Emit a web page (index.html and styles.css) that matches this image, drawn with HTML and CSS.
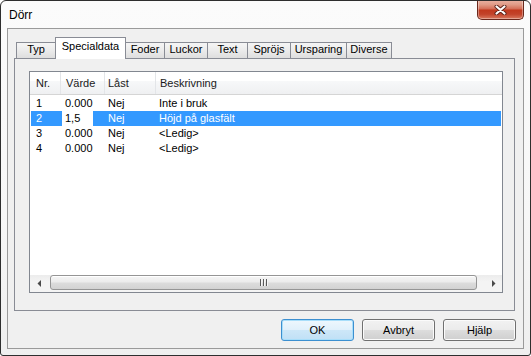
FILE: index.html
```html
<!DOCTYPE html>
<html>
<head>
<meta charset="utf-8">
<title>Dörr</title>
<link rel="stylesheet" href="styles.css">
</head>
<body>
<div class="window">
  <div class="titlebar">
    <span class="title">Dörr</span>
    <div class="close">
      <svg width="13" height="10" viewBox="0 0 13 10">
        <path d="M2.5 1.5 L10.5 8.5 M10.5 1.5 L2.5 8.5" stroke="#5b2218" stroke-width="4" stroke-linecap="round" fill="none"/>
        <path d="M2.5 1.5 L10.5 8.5 M10.5 1.5 L2.5 8.5" stroke="#ffffff" stroke-width="2.2" stroke-linecap="round" fill="none"/>
      </svg>
    </div>
  </div>
  <div class="client">
    <div class="tabs">
      <div class="tab t-typ">Typ</div>
      <div class="tab sel t-spec">Specialdata</div>
      <div class="tab t-foder">Foder</div>
      <div class="tab t-luckor">Luckor</div>
      <div class="tab t-text">Text</div>
      <div class="tab t-sprojs">Spröjs</div>
      <div class="tab t-ursp">Ursparing</div>
      <div class="tab t-div">Diverse</div>
    </div>
    <div class="panel">
      <div class="list">
        <div class="header">
          <div class="hc h0">Nr.</div>
          <div class="hc h1">Värde</div>
          <div class="hc h2">Låst</div>
          <div class="hc h3">Beskrivning</div>
        </div>
        <div class="body">
          <div class="row">
            <span class="c0">1</span><span class="c1">0.000</span><span class="c2">Nej</span><span class="c3">Inte i bruk</span>
          </div>
          <div class="row selected">
            <span class="c0">2</span><span class="c1 editcell"><span class="edit">1,5</span></span><span class="c2">Nej</span><span class="c3">Höjd på glasfält</span>
          </div>
          <div class="row">
            <span class="c0">3</span><span class="c1">0.000</span><span class="c2">Nej</span><span class="c3">&lt;Ledig&gt;</span>
          </div>
          <div class="row">
            <span class="c0">4</span><span class="c1">0.000</span><span class="c2">Nej</span><span class="c3">&lt;Ledig&gt;</span>
          </div>
        </div>
        <div class="hscroll">
          <div class="sbtn">
            <svg width="4" height="7" viewBox="0 0 4 7"><path d="M4 0 L0.5 3.5 L4 7 Z" fill="#4a4a4a"/></svg>
          </div>
          <div class="thumb">
            <span class="grip"></span><span class="grip"></span><span class="grip"></span>
          </div>
          <div class="track"></div>
          <div class="sbtn">
            <svg width="4" height="7" viewBox="0 0 4 7"><path d="M0 0 L3.5 3.5 L0 7 Z" fill="#4a4a4a"/></svg>
          </div>
        </div>
      </div>
    </div>
    <div class="buttons">
      <div class="btn default">OK</div>
      <div class="btn">Avbryt</div>
      <div class="btn">Hjälp</div>
    </div>
  </div>
</div>
</body>
</html>
```
FILE: styles.css
```css
html, body {
  margin: 0;
  padding: 0;
  background: #ffffff;
}

body {
  font-family: "Liberation Sans", Arial, sans-serif;
  font-size: 11px;
  color: #000;
}

.window {
  width: 531px;
  height: 356px;
  box-sizing: border-box;
  border: 1px solid #2e2e2e;
  border-radius: 6px 6px 3px 3px;
  background: linear-gradient(180deg, #fbfbfb 0%, #f7f7f7 60%, #efefef 100%);
  padding: 0 6px 6px 6px;
  display: flex;
  flex-direction: column;
  overflow: hidden;
}

.titlebar {
  height: 27px;
  flex: none;
  display: flex;
  justify-content: space-between;
  align-items: flex-start;
}

.title {
  font-size: 12px;
  line-height: 14px;
  padding: 7px 0 0 2px;
  color: #000;
}

.close {
  width: 47px;
  height: 20px;
  margin-top: -1px;
  box-sizing: border-box;
  border: 1px solid #6a281c;
  border-top: none;
  border-radius: 0 0 5px 5px;
  background: linear-gradient(180deg, #eab2a3 0%, #e09a86 25%, #d36b54 48%, #c1381d 52%, #c2432a 75%, #d9795f 100%);
  box-shadow: inset 0 0 0 1px rgba(255, 255, 255, 0.35);
  display: flex;
  align-items: center;
  justify-content: center;
}

.client {
  flex: 1;
  border: 1px solid #9a9a9a;
  background: #f0f0f0;
  padding: 0 8px 7px 6px;
  display: flex;
  flex-direction: column;
}

.tabs {
  display: flex;
  align-items: flex-end;
  height: 21px;
  margin: 8px 0 0 2px;
}

.tab {
  box-sizing: border-box;
  height: 16px;
  border: 1px solid #898c95;
  border-bottom: none;
  margin-left: -1px;
  background: linear-gradient(180deg, #f5f5f5 0%, #ebebeb 50%, #dedede 100%);
  text-align: center;
  line-height: 13px;
  white-space: nowrap;
}

.tab.t-typ { margin-left: 0; width: 40px; }
.tab.t-spec { width: 71px; }
.tab.t-foder { width: 40px; }
.tab.t-luckor { width: 44px; }
.tab.t-text { width: 41px; }
.tab.t-sprojs { width: 44px; }
.tab.t-ursp { width: 57px; }
.tab.t-div { width: 46px; }

.tab.sel {
  height: 22px;
  margin-bottom: -1px;
  background: #ffffff;
  position: relative;
  z-index: 1;
  line-height: 17px;
}

.panel {
  box-sizing: border-box;
  height: 253px;
  border: 1px solid #898c95;
  background: #f0f0f0;
  padding: 12px 11px 17px 14px;
}

.list {
  width: 474px;
  height: 222px;
  box-sizing: border-box;
  border: 1px solid #828790;
  background: #ffffff;
  display: flex;
  flex-direction: column;
}

.header {
  height: 23px;
  flex: none;
  box-sizing: border-box;
  border-bottom: 1px solid #d5d5d5;
  background: linear-gradient(180deg, #ffffff 0%, #ffffff 40%, #f7f8f9 41%, #eff0f2 100%);
  display: grid;
  grid-template-columns: 31px 44px 51px 1fr;
}

.hc {
  border-right: 1px solid #e3e5e8;
  line-height: 21px;
  padding-top: 1px;
  color: #1a1a1a;
  white-space: nowrap;
}

.hc.h0 { padding-left: 6px; }
.hc.h1 { padding-left: 5px; }
.hc.h2 { padding-left: 3px; }
.hc.h3 { padding-left: 4px; border-right: none; }

.body {
  flex: 1;
  padding-top: 1px;
}

.row {
  display: grid;
  grid-template-columns: 31px 43px 51px 1fr;
  height: 15px;
  line-height: 15px;
  margin: 0 1px;
  white-space: nowrap;
}

.row .c0 { padding-left: 5px; }
.row .c1 { padding-left: 3px; }
.row .c2 { padding-left: 3px; }
.row .c3 { padding-left: 3px; }

.row.selected {
  background: #3399ff;
  color: #ffffff;
}

.row .c1.editcell {
  padding-left: 0;
}

.edit {
  display: block;
  width: 31px;
  box-sizing: border-box;
  padding-left: 3px;
  background: #ffffff;
  color: #000000;
}

.hscroll {
  height: 17px;
  flex: none;
  display: flex;
  background: linear-gradient(180deg, #ececec 0%, #f4f4f4 40%, #f4f4f4 100%);
}

.sbtn {
  width: 17px;
  display: flex;
  align-items: center;
  justify-content: center;
}

.thumb {
  width: 427px;
  height: 15px;
  margin-left: 3px;
  box-sizing: border-box;
  border: 1px solid #959595;
  border-radius: 3px;
  background: linear-gradient(180deg, #f5f5f5 0%, #ececec 45%, #dcdcdc 55%, #d2d2d2 100%);
  box-shadow: inset 0 1px 0 #ffffff;
  display: flex;
  align-items: center;
  justify-content: center;
  gap: 1px;
}

.grip {
  width: 1px;
  height: 7px;
  background: #5a5a5a;
  border-right: 1px solid #f5f5f5;
}

.track {
  flex: 1;
}

.buttons {
  display: flex;
  justify-content: flex-end;
  gap: 8px;
  margin: 8px -1px 0 0;
}

.btn {
  width: 73px;
  height: 22px;
  box-sizing: border-box;
  border: 1px solid #707070;
  border-radius: 3px;
  background: linear-gradient(180deg, #f2f2f2 0%, #ebebeb 50%, #dddddd 51%, #cfcfcf 100%);
  box-shadow: inset 0 0 0 1px #fbfbfb;
  display: flex;
  align-items: center;
  justify-content: center;
  line-height: 13px;
}

.btn.default {
  border-color: #3c8fd0;
  background: linear-gradient(180deg, #eef7fd 0%, #e0f0fb 50%, #cde7f8 51%, #c0e0f6 100%);
  box-shadow: inset 0 0 0 1px #a8defa;
}
```
